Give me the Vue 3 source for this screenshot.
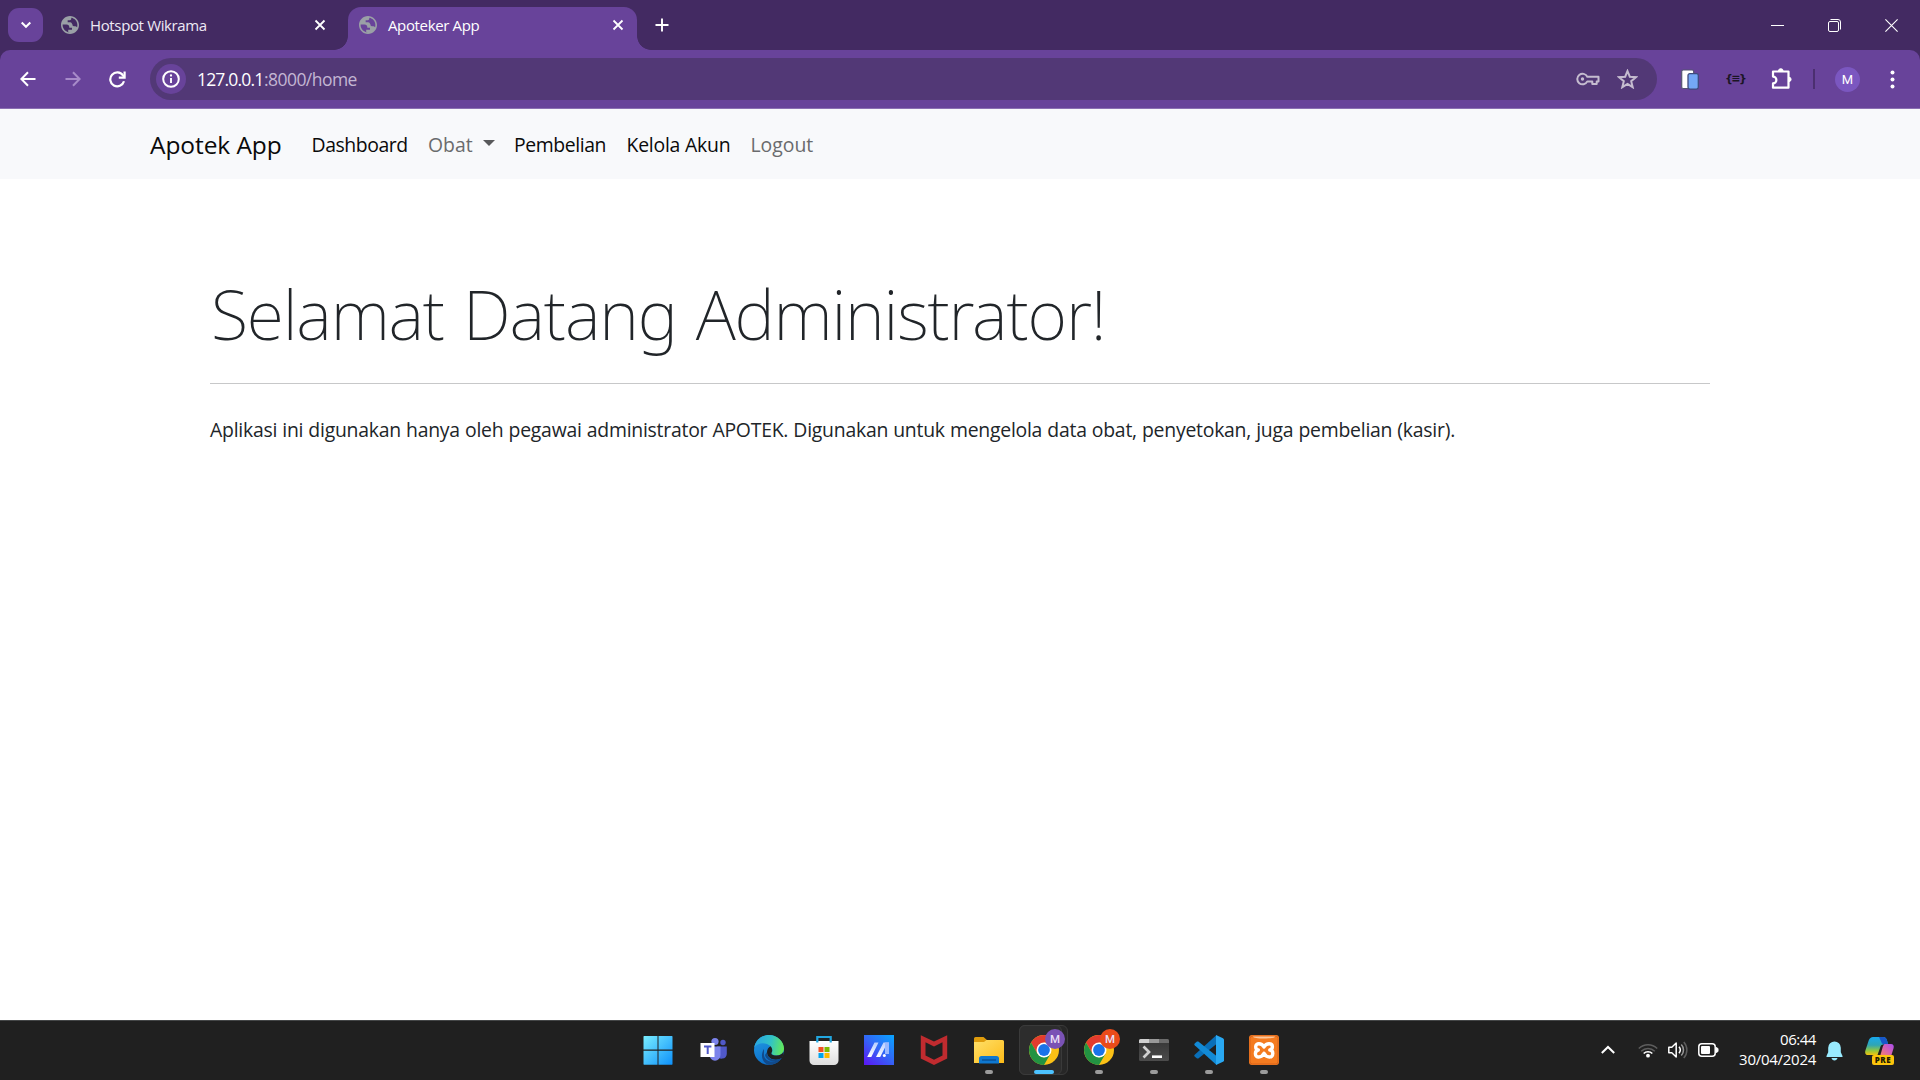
<script setup>
import { h } from 'vue'

const links = [
  { label: 'Dashboard', cls: 'dashboard' },
  { label: 'Obat', cls: 'obat muted', caret: true },
  { label: 'Pembelian', cls: 'pembelian' },
  { label: 'Kelola Akun', cls: 'akun' },
  { label: 'Logout', cls: 'logout muted' },
]

const Globe = () =>
  h('svg', { width: 18, height: 18, viewBox: '2 2 20 20' }, [
    h('path', {
      fill: '#9aa0a6',
      d: 'M12 2C6.48 2 2 6.48 2 12s4.48 10 10 10 10-4.48 10-10S17.52 2 12 2zm0 18.2c-4.5 0-8.2-3.7-8.2-8.2v-.6h4.4c1.9 0 3 1.2 3 3v.6h3v2.2h-4.2v2.7c.6.2 1.3.3 2 .3zm2.2-9.2c0-1.2-.9-2-2-2H9.400V6.600h2.400c1 0 1.600-.7 1.600-1.500v-1.100c4 .7 6.800 4 6.800 8 0 .9-.1 1.700-.4 2.500-.8-.9-1.300-1-2.400-1h-1c-1.100 0-1.800-.9-1.800-2.500z',
    }),
  ])

const Cross = () =>
  h('svg', { width: 12, height: 12, viewBox: '0 0 12 12' }, [
    h('path', { d: 'M1.500 1.500l9 9M10.500 1.500l-9 9', stroke: '#fff', 'stroke-width': 1.8, fill: 'none' }),
  ])

const Chrome = () =>
  h('svg', { width: 30, height: 30, viewBox: '0 0 30 30' }, [
    h('circle', { cx: 15, cy: 15, r: 15, fill: '#fbc116' }),
    h('path', { fill: '#e33b2e', d: 'M2.010 7.500A15 15 0 0 1 27.990 7.500H15L8.500 18.750z' }),
    h('path', { fill: '#229342', d: 'M2.010 7.500A15 15 0 0 0 15 30L21.500 18.750 15 22.500 8.500 18.750z' }),
    h('circle', { cx: 15, cy: 15, r: 7.5, fill: '#fff' }),
    h('circle', { cx: 15, cy: 15, r: 5.9, fill: '#1a73e8' }),
  ])
</script>

<template>
  <div class="screen">
    <header class="browser">
      <div class="tabstrip">
        <div class="tab-search">
          <svg width="12" height="8" viewBox="0 0 12 8"><path d="M1.700 1.500L6 5.800l4.300-4.300" fill="none" stroke="#fff" stroke-width="2" /></svg>
        </div>
        <div class="tab idle"><Globe /><span>Hotspot Wikrama</span><Cross class="close" /></div>
        <div class="tab active"><Globe /><span>Apoteker App</span><Cross class="close" /></div>
        <svg class="plus" width="14" height="14" viewBox="0 0 14 14"><path d="M7 .5v13M.5 7h13" stroke="#fff" stroke-width="1.900" /></svg>
        <div class="controls">
          <svg width="13" height="13" viewBox="0 0 13 13"><path d="M0 6.500h13" stroke="#fff" /></svg>
          <svg width="13" height="13" viewBox="0 0 13 13" fill="none" stroke="#fff"><rect x=".5" y="2.500" width="10" height="10" rx="1.500" /><path d="M2.500.5H10a2.500 2.500 0 0 1 2.500 2.500v7.500" /></svg>
          <svg width="13" height="13" viewBox="0 0 13 13"><path d="M.4.400l12.200 12.200M12.600.4L.4 12.600" stroke="#fff" stroke-width="1.100" /></svg>
        </div>
      </div>

      <div class="toolbar">
        <svg class="back" width="16" height="16" viewBox="0 0 16 16" fill="none" stroke="#fff" stroke-width="2"><path d="M15.500 8H1.700M8 1.200L1.400 8 8 14.800" /></svg>
        <svg class="forward" width="16" height="16" viewBox="0 0 16 16" fill="none" stroke="#a78bc9" stroke-width="2"><path d="M.5 8h13.800M8 1.200L14.600 8 8 14.800" /></svg>
        <svg class="reload" width="17" height="17" viewBox="0 0 17 17" fill="none" stroke="#fff" stroke-width="2.200"><path d="M15 10.300A7 7 0 1 1 14 4.300l1.300 1.700" /><path d="M15.600.4v6.200H9.800" /></svg>
        <div class="omnibox">
          <div class="info">
            <svg width="18" height="18" viewBox="0 0 18 18"><circle cx="9" cy="9" r="7.800" fill="none" stroke="#fff" stroke-width="2" /><path d="M9 8v5" stroke="#fff" stroke-width="1.900" /><circle cx="9" cy="5.500" r="1.150" fill="#fff" /></svg>
          </div>
          <span class="host">127.0.0.1</span><span class="path">:8000/home</span>
          <svg class="key" width="24" height="14" viewBox="0 0 24 14" fill="none" stroke="#c5bccf" stroke-width="2"><path d="M11.300 4.700H22.500V9.400H20.700V12H16.300V9.400H11.300A5.300 5.300 0 1 1 11.300 4.700z" stroke-linejoin="round" /><circle cx="6.500" cy="7" r="1.700" fill="#c5bccf" stroke="none" /></svg>
          <svg class="star" width="21" height="20" viewBox="0 0 21 20"><path d="M10.500 2l2.300 5.700 6.100.5-4.700 4 1.500 6-5.200-3.300-5.200 3.300 1.500-6-4.700-4 6.100-.5z" fill="none" stroke="#c5bccf" stroke-width="2" /></svg>
        </div>
        <svg class="clip" width="18" height="21" viewBox="0 0 18 21"><rect x=".7" y="1" width="12" height="18.500" rx="1.500" fill="#fff" stroke="#555573" stroke-width="1.200" /><rect x="7" y="4.600" width="10.300" height="15.500" rx="1.800" fill="#74a7f6" stroke="#3f4a7d" stroke-width="1.300" /></svg>
        <span class="braces">{≡}</span>
        <svg class="puzzle" width="22" height="22" viewBox="0 0 22 22"><path d="M3.500 3.500H17.500V19.700H2V15.400a2.600 2.600 0 0 0 0-6.800V3.500z" fill="none" stroke="#fff" stroke-width="2.200" stroke-linejoin="round" /><path d="M7.500 3a2.300 2.300 0 0 1 4.600 0zM18 9.300a2 2 0 0 1 0 4.200z" fill="#fff" stroke="#fff" /></svg>
        <div class="divider"></div>
        <div class="avatar">M</div>
        <svg class="dots" width="5" height="19" viewBox="0 0 5 19" fill="#fff"><circle cx="2.500" cy="2.500" r="2" /><circle cx="2.500" cy="9.500" r="2" /><circle cx="2.500" cy="16.500" r="2" /></svg>
      </div>
    </header>

    <nav class="navbar">
      <a class="brand">Apotek App</a>
      <a v-for="l in links" :key="l.label" class="link" :class="l.cls">{{ l.label }}<i v-if="l.caret" class="caret"></i></a>
    </nav>

    <main>
      <h1>Selamat Datang Administrator!</h1>
      <hr />
      <p>Aplikasi ini digunakan hanya oleh pegawai administrator APOTEK. Digunakan untuk mengelola data obat, penyetokan, juga pembelian (kasir).</p>
    </main>

    <footer class="taskbar">
      <div class="apps">
        <div class="app">
          <svg class="win" width="30" height="30" viewBox="0 0 30 30"><defs><linearGradient id="wg" x1="0" y1="0" x2="30" y2="30" gradientUnits="userSpaceOnUse"><stop offset="0" stop-color="#7cf0ff" /><stop offset="1" stop-color="#0c8ffa" /></linearGradient></defs><path fill="url(#wg)" d="M1 1h13.500v13.500H.5V1.500zM15.500 1H29l.5.5v13h-14zM.5 15.700h14v14H1l-.5-.5zM15.500 15.700h14v13.500l-.5.500H15.500z" /></svg>
        </div>
        <div class="app">
          <svg width="30" height="30" viewBox="0 0 30 30"><circle cx="24" cy="7.500" r="2.700" fill="#5059c9" /><path d="M18 11.500h9.800V19a5 5 0 0 1-9.800 1z" fill="#5059c9" /><circle cx="16" cy="6.500" r="3.600" fill="#7b83eb" /><path d="M10.500 11.500h11V20a5.500 5.800 0 0 1-11 0z" fill="#7b83eb" /><rect x="1.500" y="8" width="14" height="14" fill="#fff" /><path d="M5 11.500h7.400M8.700 11.500v7.600" stroke="#5059c9" stroke-width="2" /></svg>
        </div>
        <div class="app">
          <svg width="30" height="30" viewBox="0 0 30 30"><defs><linearGradient id="eg" x1="2" y1="8" x2="30" y2="14" gradientUnits="userSpaceOnUse"><stop offset="0" stop-color="#2aa8e0" /><stop offset=".5" stop-color="#32c3c6" /><stop offset="1" stop-color="#66eb52" /></linearGradient><linearGradient id="eb" x1="5" y1="8" x2="14" y2="30" gradientUnits="userSpaceOnUse"><stop offset="0" stop-color="#1d8fdc" /><stop offset="1" stop-color="#0a6cc9" /></linearGradient></defs><circle cx="15" cy="15" r="15" fill="url(#eb)" /><path d="M10 18c-1 7 7 12 17.500 5.300A15 15 0 0 1 15 30C8 28 6 20 10 14z" fill="#114a8b" /><path d="M.2 12.500C1.500 5 7.500 0 15 0c8.500 0 15 6.500 15 13.500 0 4-3 7-7.300 7-3.500 0-5.700-1.200-5.200-2.500 2-3 .5-7-4.500-9C8 7 2.500 9 .2 12.500z" fill="url(#eg)" /><path d="M17.500 17.800c-.8 1.800 2 2.700 5.200 2.700 3 0 5.500-1.300 6.600-3.500.8 2.500-.3 5-1.800 6.300C23 26 13 25 13 17c0-2.500 1.500-4.700 3.500-5.700 1.700 1.700 2.300 4.500 1 6.500z" fill="#202020" /><path d="M13 17c0 8 8 9.500 14.700 6.100-4.700 5.400-15.200 3.900-16.700-3.100z" fill="#114a8b" /></svg>
        </div>
        <div class="app">
          <svg width="30" height="30" viewBox="0 0 30 30"><defs><linearGradient id="sg" x1="0" y1="0" x2="0" y2="1"><stop offset="0" stop-color="#fff" /><stop offset="1" stop-color="#dedede" /></linearGradient></defs><path d="M.5 6h29v19.500a4.500 4.500 0 0 1-4.500 4.500H5a4.500 4.500 0 0 1-4.500-4.500z" fill="url(#sg)" /><path d="M8.300 7.500V2h13.400v5.500" fill="none" stroke="#22a7e0" stroke-width="2.200" /><path d="M9.500 12h5v5h-5z" fill="#f25022" /><path d="M15.500 12h5v5h-5z" fill="#7fba00" /><path d="M9.500 18h5v5h-5z" fill="#00a4ef" /><path d="M15.500 18h5v5h-5z" fill="#ffb900" /></svg>
        </div>
        <div class="app">
          <svg width="30" height="30" viewBox="0 0 30 30"><defs><linearGradient id="mg" x1="2" y1="30" x2="28" y2="0" gradientUnits="userSpaceOnUse"><stop offset="0" stop-color="#5a19f5" /><stop offset=".5" stop-color="#3464f6" /><stop offset="1" stop-color="#0aa2ff" /></linearGradient><linearGradient id="mw" x1="0" y1="0" x2="0" y2="1"><stop offset="0" stop-color="#b7cdff" /><stop offset="1" stop-color="#fff" /></linearGradient></defs><path fill="url(#mg)" d="M0 0h30v30H0z" /><path fill="url(#mw)" d="M10.500 7.500h4L7.300 22H3.200zM19.500 7.500H25V19h-4v-6.500L16.200 22H12z" /><path fill="#9bb9ff" d="M21 7.500h4V19h-4z" /><circle cx="20.300" cy="20.400" r="1.500" fill="#fff" /></svg>
        </div>
        <div class="app">
          <svg width="30" height="30" viewBox="0 0 30 30"><path d="M1.800.2L15 6.500 28.200.2V23.500L15 30 1.800 23.500zM6.500 7.200V20.500L15 24.700l8.500-4.200V7.200L15 11.400z" fill="#c02b2f" fill-rule="evenodd" /></svg>
        </div>
        <div class="app">
          <svg width="30" height="30" viewBox="0 0 30 30"><defs><linearGradient id="fg" x1="0" y1="0" x2="1" y2="1"><stop offset="0" stop-color="#ffe069" /><stop offset="1" stop-color="#fdbb18" /></linearGradient></defs><path d="M0 8V3.500A1.500 1.500 0 0 1 1.500 2H9.500l4 3.500V10H0z" fill="#df9c0c" /><path d="M0 7h10l2.500-2H28.500A1.500 1.500 0 0 1 30 6.500V28H0z" fill="url(#fg)" /><path d="M5 28.500V23.500A2.500 2.500 0 0 1 7.500 21h15a2.500 2.500 0 0 1 2.500 2.500v5z" fill="#0f78d0" /><path d="M8 25h14" stroke="#07498a" stroke-width="1.200" /></svg>
          <i class="run"></i>
        </div>
        <div class="app">
          <div class="stack"></div><div class="active-app"></div>
          <Chrome /><b class="badge violet">M</b><i class="run current"></i>
        </div>
        <div class="app"><Chrome /><b class="badge orange">M</b><i class="run"></i></div>
        <div class="app">
          <svg width="30" height="30" viewBox="0 0 30 30"><defs><linearGradient id="tg" x1="0" y1="0" x2="0" y2="1"><stop offset="0" stop-color="#353535" /><stop offset="1" stop-color="#4c4c4c" /></linearGradient></defs><rect y="4" width="30" height="22" rx="1.500" fill="url(#tg)" /><path d="M0 8V5.500A1.500 1.500 0 0 1 1.500 4H10v4z" fill="#cfcfcf" /><path d="M10 4h10v4H10z" fill="#999" /><path d="M20 4h8.500A1.500 1.500 0 0 1 30 5.500V8H20z" fill="#6b6b6b" /><path d="M4.500 11.500l5.500 5.500-5.500 5.500" fill="none" stroke="#d0d0d0" stroke-width="2.700" /><path d="M13 21.700h10" stroke="#fff" stroke-width="2.600" /></svg>
          <i class="run"></i>
        </div>
        <div class="app">
          <svg width="30" height="30" viewBox="0 0 30 30"><path d="M22.500 0L.7 19.800a1.200 1.200 0 0 0 0 1.700l2 1.800c.5.400 1.100.4 1.600.1L22.500 9z" fill="#0a6fb8" /><path d="M22.500 30L.7 10.200a1.200 1.200 0 0 1 0-1.700l2-1.800c.5-.4 1.100-.4 1.600-.1L22.500 21z" fill="#128ad6" /><path d="M22 0l7 3.200c.6.3 1 .9 1 1.600v20.400c0 .7-.4 1.300-1 1.600L22 30z" fill="#29a8f2" /></svg>
          <i class="run"></i>
        </div>
        <div class="app">
          <svg width="30" height="30" viewBox="0 0 30 30"><rect width="30" height="30" rx="3" fill="#f47b20" /><rect x="1" y="1" width="28" height="28" rx="2.500" fill="none" stroke="#d9641a" /><path d="M4 1.500h22c0 1.500-5 2-11 2s-11-.5-11-2z" fill="#fbc79c" /><path d="M15 12c-2.500-4.500-8.300-4.200-8.300-.3 0 2 1.300 3.100 2.600 3.300-1.500.3-2.900 1.500-2.900 3.700 0 4.500 6 4.500 8.600-.4 2.600 4.900 8.800 4.900 8.800.2 0-2.200-1.300-3.300-3-3.500 1.400-.3 2.600-1.400 2.600-3.200C23.400 7.800 17.500 7.500 15 12z" fill="none" stroke="#fff" stroke-width="3.400" stroke-linejoin="round" /></svg>
          <i class="run"></i>
        </div>
      </div>

      <div class="tray">
        <svg class="up" width="16" height="10" viewBox="0 0 16 10"><path d="M1.800 8L8 2l6.200 6" fill="none" stroke="#fff" stroke-width="2" /></svg>
        <svg class="wifi" width="20" height="16" viewBox="0 0 20 16" fill="none" stroke-width="1.500"><path d="M.8 6.500a13 13 0 0 1 18.400 0M3.200 9.300a9.600 9.600 0 0 1 13.600 0" stroke="#5d5d5d" /><path d="M5.700 11.500a6.200 6.200 0 0 1 8.600 0" stroke="#fff" stroke-width="1.700" /><circle cx="10" cy="13.700" r="1.900" fill="#fff" /></svg>
        <svg class="vol" width="21" height="18" viewBox="0 0 21 18" fill="none" stroke="#fff" stroke-width="1.500"><path d="M.8 6.200h3L8.200 2v14l-4.400-4.200h-3z" stroke-linejoin="round" /><path d="M11 5.800a5 5 0 0 1 0 6.400" /><path d="M13.300 3.500a8 8 0 0 1 0 11" stroke="#999" /><path d="M15.800 1a12 12 0 0 1 0 16" stroke="#5d5d5d" /></svg>
        <svg class="bat" width="21" height="14" viewBox="0 0 21 14"><rect x=".8" y=".8" width="16.400" height="12.400" rx="3" fill="none" stroke="#fff" stroke-width="1.500" /><rect x="3" y="3" width="9" height="8" rx="1" fill="#fff" /><path d="M18 4.500l2 1v3l-2 1z" fill="#fff" stroke="#fff" /></svg>
        <div class="clock"><span class="time">06:44</span><span class="date">30/04/2024</span></div>
        <svg class="bell" width="17" height="20" viewBox="0 0 17 20" fill="#99ebff"><path d="M8.500.5A6.300 6.300 0 0 1 14.800 6.800v4.400L16.500 15v1H.5v-1l1.700-3.800V6.800A6.300 6.300 0 0 1 8.500.5zM5.500 17h6c-.3 1.500-1.500 2.500-3 2.500s-2.700-1-3-2.500z" /></svg>
        <div class="copilot">
          <svg width="30" height="28" viewBox="0 0 30 28"><defs><linearGradient id="ca" x1="0" y1="0" x2="0" y2="1"><stop offset="0" stop-color="#18a9ee" /><stop offset=".45" stop-color="#2fa5b4" /><stop offset=".75" stop-color="#8fc641" /><stop offset="1" stop-color="#f4c20d" /></linearGradient><linearGradient id="cb" x1="1" y1="0" x2="0" y2="1"><stop offset="0" stop-color="#a94df0" /><stop offset=".5" stop-color="#d763b0" /><stop offset="1" stop-color="#f9855e" /></linearGradient></defs><path d="M8 0h10c2.500 0 3.500 1.500 4.200 4l1 3.500h-4c-3 0-3.500 1-4.200 3.500L12.500 18H3C.5 18-.3 16 .4 13.500l3.300-10C4.500 1.300 6 0 8 0z" fill="url(#ca)" /><path d="M14 0h4c2.500 0 3.500 1.500 4.200 4l1 3.500h-4L17 6.500z" fill="#1857c8" /><path d="M19.500 7H26c2.300 0 3.200 1.800 2.600 4L26 19.500H15L18 9z" fill="url(#cb)" /></svg>
          <b>PRE</b>
        </div>
      </div>
    </footer>
  </div>
</template>

<style>
body { margin: 0; overflow: hidden; }
</style>

<style scoped>
.screen { width: 1920px; height: 1080px; display: flex; flex-direction: column; background: #fff; font-family: "Open Sans", sans-serif; white-space: nowrap; }
svg { display: block; flex: none; }

.browser { height: 109px; flex: none; background: #432a62; }
.tabstrip { height: 50px; display: flex; align-items: center; color: #fff; font-size: 15px; line-height: 20px; }
.tab-search { width: 35px; height: 34px; margin-left: 8px; border-radius: 11px; background: #68439a; display: flex; align-items: center; justify-content: center; }
.tab { display: flex; align-items: center; box-sizing: border-box; }
.tab span { margin-left: 11px; letter-spacing: -.36px; }
.tab .close { margin-left: auto; }
.idle { width: 305px; height: 50px; padding: 0 22px 0 18px; color: #eee9f4; }
.active { position: relative; width: 289px; height: 43px; align-self: flex-end; padding: 0 13px 7px 11px; border-radius: 13px 13px 0 0; background: #68439a; }
.active::before, .active::after { content: ""; position: absolute; bottom: 0; width: 14px; height: 14px; }
.active::before { left: -14px; background: radial-gradient(circle at 0 0, transparent 13.500px, #68439a 14.200px); }
.active::after { right: -14px; background: radial-gradient(circle at 100% 0, transparent 13.500px, #68439a 14.200px); }
.plus { margin-left: 18px; }
.controls { display: flex; gap: 44px; margin-left: auto; padding-right: 22px; }

.toolbar { height: 59px; box-sizing: border-box; display: flex; align-items: center; border-radius: 10px 10px 0 0; background: #68439a; border-bottom: 1px solid #8b6fb2; }
.back { margin-left: 20px; }
.forward { margin-left: 29px; }
.reload { margin-left: 28px; }
.omnibox { width: 1507px; height: 42px; margin-left: 24px; border-radius: 21px; background: #523876; display: flex; align-items: center; font-size: 17.500px; }
.info { width: 30px; height: 30px; margin: 0 11px 0 6px; border-radius: 50%; background: #68439a; display: flex; align-items: center; justify-content: center; }
.host { color: #fff; letter-spacing: -.82px; width: 67px; }
.path { color: #c3b6d3; letter-spacing: -.55px; }
.key { margin-left: auto; }
.star { margin: 0 19px 0 17px; }
.clip { margin-left: 24px; }
.braces { width: 19px; margin-left: 26px; color: #1b1524; font: bold 11px/20px "DejaVu Sans", sans-serif; letter-spacing: -1.500px; text-align: center; }
.puzzle { margin-left: 27px; }
.divider { width: 2px; height: 20px; margin-left: 20px; background: #4b2f70; }
.avatar { width: 25px; height: 25px; margin-left: 20px; border-radius: 50%; background: #7b57c0; color: #fff; font: 13px/25px Roboto, sans-serif; text-align: center; }
.dots { margin-left: 30px; }

.navbar { height: 70px; flex: none; display: flex; align-items: center; padding-left: 150px; background: #f8f9fb; color: #0a0a0a; font-size: 19.400px; }
.brand { width: 151.500px; font-size: 24.500px; letter-spacing: -.08px; }
.link { padding: 0 10px; box-sizing: border-box; display: flex; align-items: center; }
.muted { color: #6a6b6d; }
.dashboard { width: 116.500px; letter-spacing: -.42px; }
.obat { width: 86px; }
.pembelian { width: 112.500px; letter-spacing: -.4px; }
.akun { width: 124px; letter-spacing: -.22px; }
.caret { margin: -3px 0 0 10px; border: 6px solid transparent; border-top-color: #58595b; border-bottom: 0; }

main { flex: 1; padding: 93px 210px 0; color: #212529; }
h1 { margin: 0; font: 200 68px/84px "Noto Sans", sans-serif; letter-spacing: -1.150px; word-spacing: 2.500px; text-indent: 1px; }
hr { height: 1px; margin: 27px 0 31px; border: 0; background: #c7c8c9; }
p { margin: 0; font-size: 19.400px; line-height: 30px; letter-spacing: -.24px; word-spacing: .35px; }

.taskbar { height: 60px; box-sizing: border-box; flex: none; display: flex; background: #202020; border-top: 1px solid #444647; color: #fff; }
.apps { display: flex; margin-left: 631px; }
.app { position: relative; width: 55px; height: 58px; display: flex; align-items: center; justify-content: center; }
.app svg { position: relative; }
.app .win { margin-right: 2px; }
.run { position: absolute; bottom: 5px; left: 24px; width: 8px; height: 4px; border-radius: 2px; background: #9b9b9b; }
.current { left: 18px; width: 20px; background: #4cc2ff; }
.active-app, .stack { position: absolute; left: 3px; top: 4px; width: 43px; height: 50px; box-sizing: border-box; border-radius: 6px; background: #2d2d2d; border: 1px solid #3a3a3a; }
.stack { width: 49px; background: #272727; }
.badge { position: absolute; left: 29px; top: 8px; width: 20px; height: 20px; border-radius: 50%; color: #e9dff5; font: 500 11.500px/20px Roboto, sans-serif; text-align: center; }
.violet { background: #7a52b5; }
.orange { background: #ea4b1a; }

.tray { height: 57px; display: flex; align-items: center; margin-left: auto; }
.up { margin-right: 22px; }
.wifi { margin-right: 10px; }
.vol { margin-right: 9px; }
.clock { width: 97px; display: flex; flex-direction: column; align-items: flex-end; font-size: 15px; line-height: 20px; padding-bottom: 1px; }
.time { letter-spacing: -.45px; }
.date { letter-spacing: -.27px; }
.bell { margin: 2px 22px 0 10px; }
.copilot { position: relative; width: 30px; height: 28px; margin: 3px 25px 0 0; }
.copilot b { position: absolute; left: 7px; top: 18px; width: 22px; height: 10px; border-radius: 2px; background: #fcc40c; color: #221b00; font: 800 8px/10px "Open Sans", sans-serif; letter-spacing: .5px; text-align: center; }
</style>
